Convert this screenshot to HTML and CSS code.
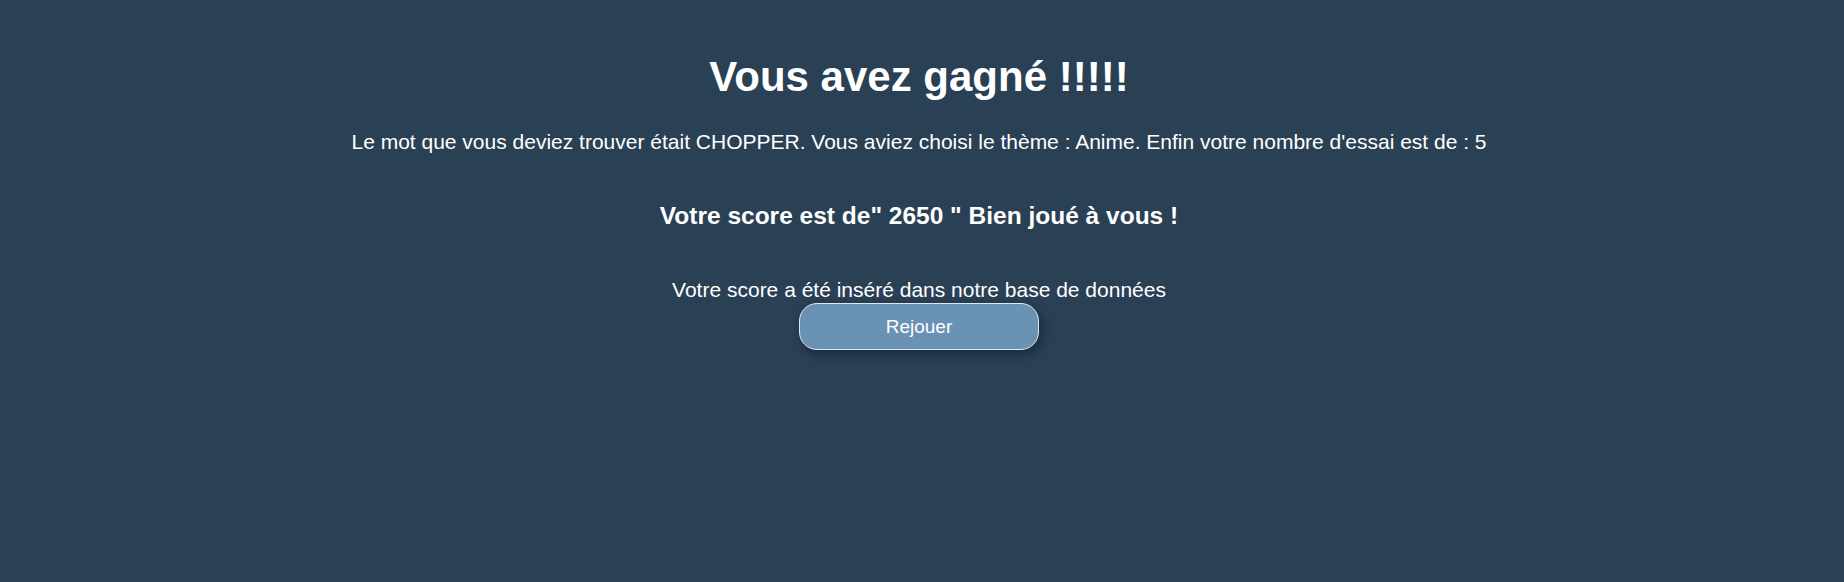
FILE: index.html
```html
<!DOCTYPE html>
<html lang="fr">
<head>
<meta charset="utf-8">
<title>Gagné</title>
<link rel="stylesheet" href="styles.css">
</head>
<body>
<main class="result">
  <h1 class="result-title">Vous avez gagné !!!!!</h1>
  <p class="result-info">Le mot que vous deviez trouver était CHOPPER. Vous aviez choisi le thème : Anime. Enfin votre nombre d'essai est de : 5</p>
  <h3 class="result-score">Votre score est de" 2650 " Bien joué à vous !</h3>
  <p class="result-saved">Votre score a été inséré dans notre base de données</p>
  <button class="replay-btn" type="button">Rejouer</button>
</main>
</body>
</html>
```
FILE: styles.css
```css
html, body {
  margin: 0;
  padding: 0;
  height: 100%;
}
body {
  background: #2a4055;
  color: #ffffff;
  font-family: "Liberation Sans", Arial, sans-serif;
}
.result {
  display: flex;
  flex-direction: column;
  align-items: center;
  padding: 53px 6px 0 0;
  text-align: center;
}
.result-title {
  margin: 0;
  font-size: 42px;
  font-weight: bold;
  line-height: normal;
}
.result-info {
  margin: 29px 0 0;
  font-size: 21px;
  line-height: normal;
}
.result-score {
  margin: 48px 0 0;
  font-size: 24.5px;
  font-weight: bold;
  line-height: normal;
}
.result-saved {
  margin: 48px 0 0;
  font-size: 21px;
  line-height: normal;
}
.replay-btn {
  margin-top: 1px;
  width: 240px;
  height: 47px;
  background: #6992b5;
  color: #ffffff;
  border: 1px solid #dfe8ef;
  border-radius: 18px;
  font-family: "Liberation Sans", Arial, sans-serif;
  font-size: 19px;
  box-shadow: 3px 4px 10px rgba(10, 20, 30, 0.5);
  cursor: pointer;
}
```
